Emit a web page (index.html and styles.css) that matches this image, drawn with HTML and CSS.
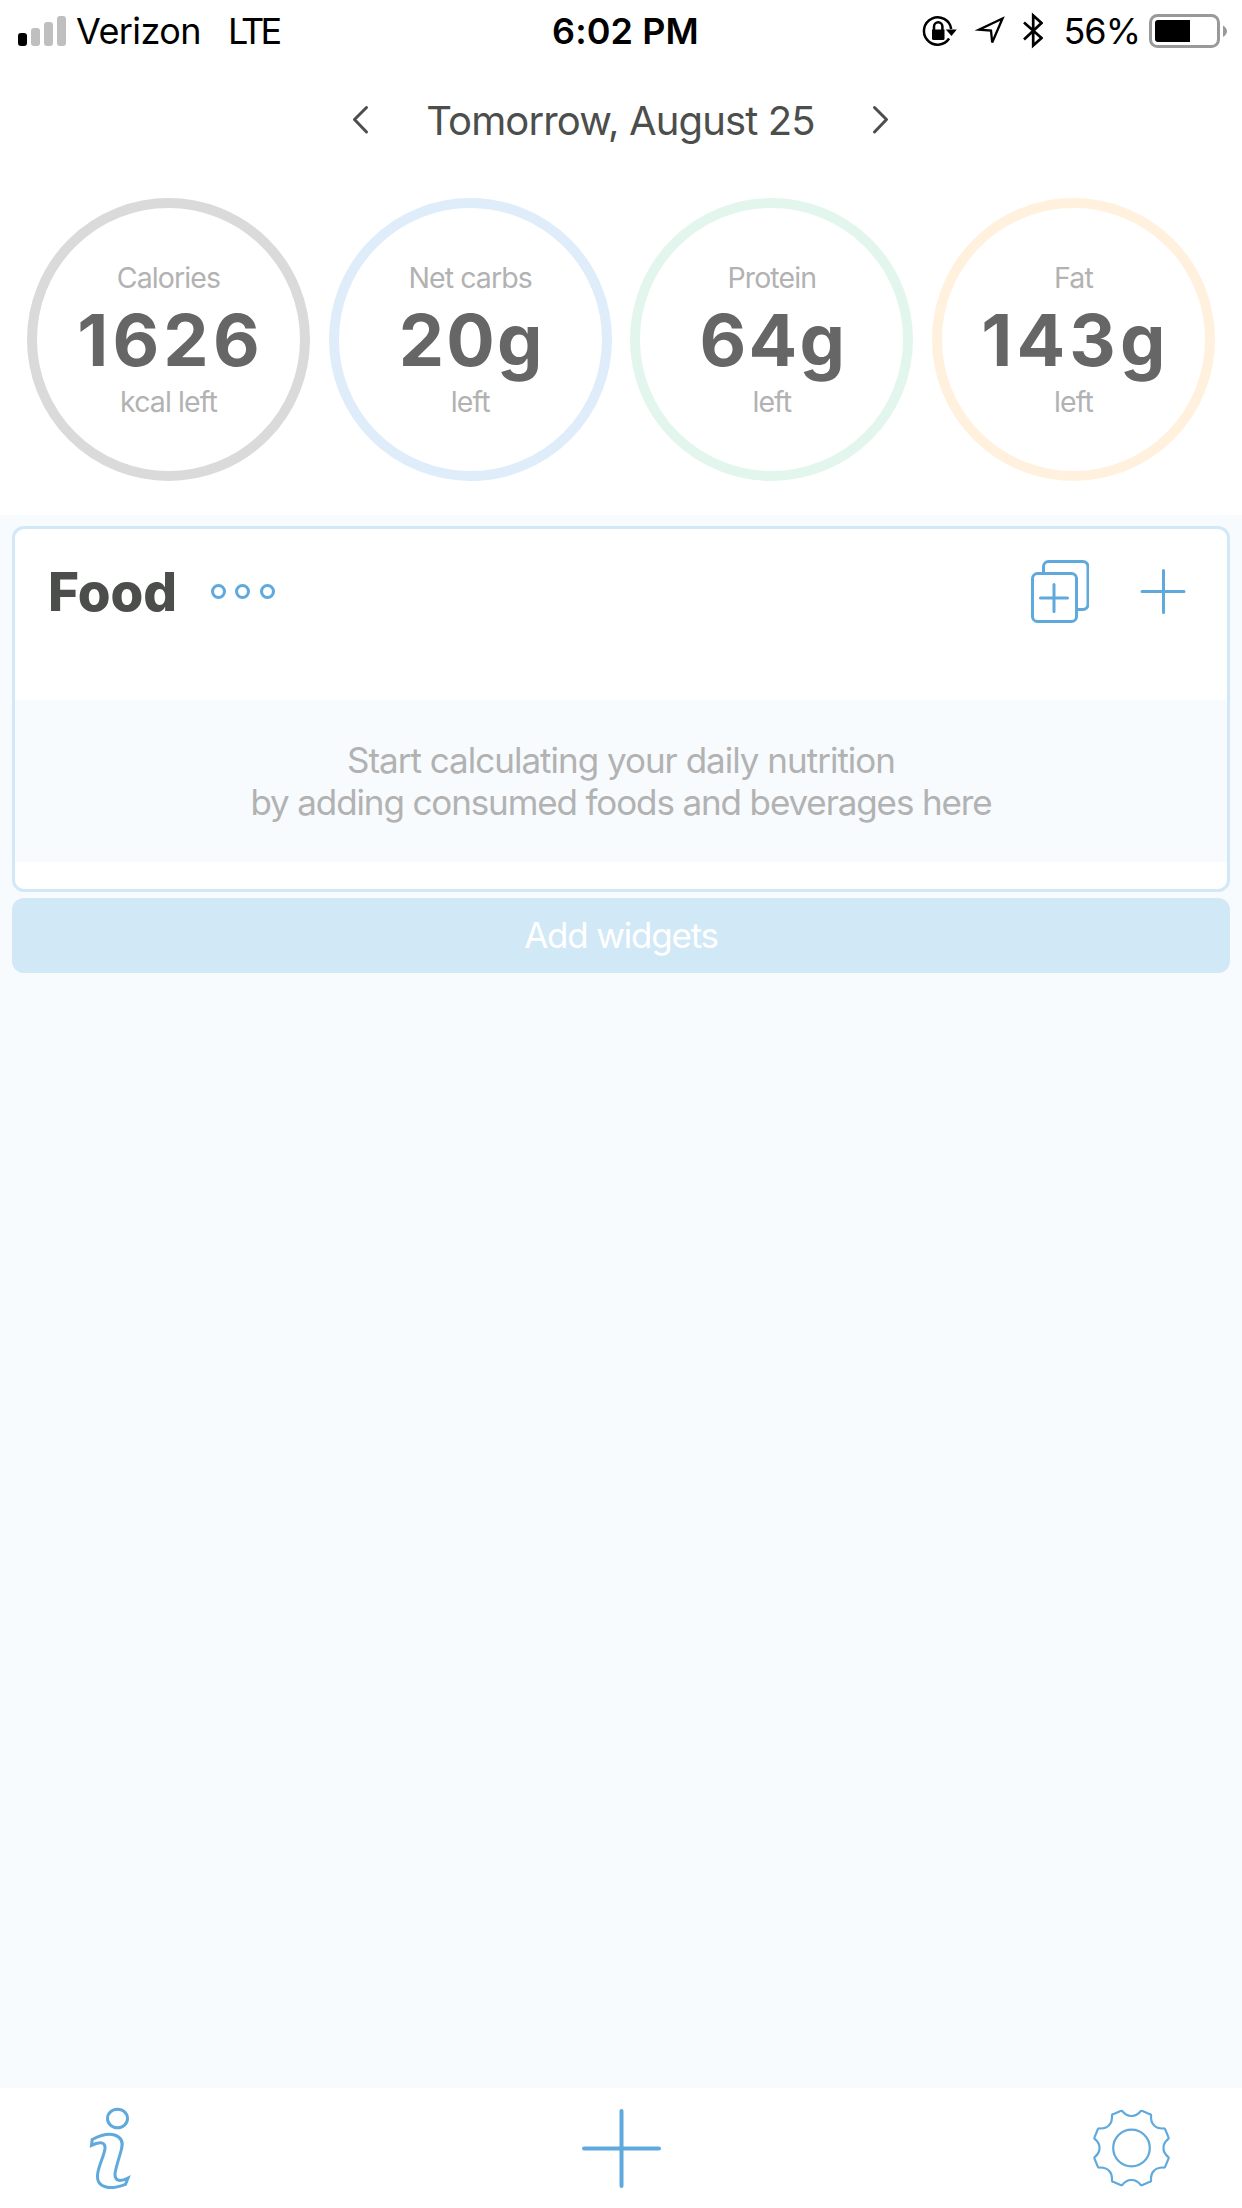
FILE: index.html
```
<!DOCTYPE html>
<html lang="en">
<head>
<meta charset="utf-8">
<title>Nutrition diary</title>
<link rel="stylesheet" href="styles.css">
</head>
<body>
<div class="app">
  <header class="header">
    <div class="status">
      <div class="status-left">
        <svg class="signal" width="48" height="32" viewBox="0 0 48 32">
          <rect x="0" y="18" width="9" height="13" rx="3" fill="#000"/>
          <rect x="13" y="13" width="9" height="18" rx="3" fill="#bfbfbf"/>
          <rect x="26" y="7" width="9" height="24" rx="3" fill="#bfbfbf"/>
          <rect x="39" y="1" width="9" height="30" rx="3" fill="#bfbfbf"/>
        </svg>
        <span class="carrier">Verizon</span>
        <span class="network">LTE</span>
      </div>
      <span class="clock">6:02 PM</span>
      <div class="status-right">
        <svg class="status-icons" width="124" height="40" viewBox="0 0 124 40">
          <g fill="none" stroke="#000" stroke-width="2.5">
            <path d="M30.100 27.500A13.700 13.700 0 1 1 32.200 18"/>
            <path d="M15 19v-3.500a4.200 4.200 0 0 1 8.400 0V19"/>
            <path d="M83.500 7.500 60 18.700 72 19.500 73.200 31.500Z" stroke-width="2.300"/>
            <path d="M105 11.500 122.500 27 114.200 34.500V4.500L122.500 12 105 28.500" stroke-width="2.700"/>
          </g>
          <path d="M13 18.500h12.500v9a1.500 1.500 0 0 1-1.500 1.500h-9.500a1.500 1.500 0 0 1-1.500-1.500Z"/>
          <path d="M26.800 18.500h11l-5.300 6.500Z"/>
        </svg>
        <span class="percent">56%</span>
        <svg class="battery" width="79" height="36" viewBox="0 0 79 36">
          <rect x="1.500" y="2.500" width="68" height="31" rx="7" fill="none" stroke="#999" stroke-width="3"/>
          <path d="M9 7H41V29H9A3 3 0 0 1 6 26V10A3 3 0 0 1 9 7Z"/>
          <path d="M74 12.500Q78 15 78 18.200T74 24Z" fill="#999"/>
        </svg>
      </div>
    </div>
    <div class="date-nav">
      <svg width="17" height="30" viewBox="0 0 17 30"><path d="M14.500 2.500 2.500 14.500 14.500 27"/></svg>
      <span class="date">Tomorrow, August 25</span>
      <svg width="17" height="30" viewBox="0 0 17 30"><path d="M2.500 2.500 14.500 14.500 2.500 27"/></svg>
    </div>
    <div class="rings">
      <div class="ring calories"><span class="label">Calories</span><span class="value wide">1626</span><span class="label">kcal left</span></div>
      <div class="ring carbs"><span class="label">Net carbs</span><span class="value">20g</span><span class="label">left</span></div>
      <div class="ring protein"><span class="label">Protein</span><span class="value">64g</span><span class="label">left</span></div>
      <div class="ring fat"><span class="label">Fat</span><span class="value wide">143g</span><span class="label">left</span></div>
    </div>
  </header>
  <main class="content">
    <section class="card">
      <div class="card-head">
        <h1 class="title">Food</h1>
        <svg class="dots" width="66" height="16" viewBox="0 0 66 16"><circle cx="8.500" cy="7.500" r="6"/><circle cx="32.500" cy="7.500" r="6"/><circle cx="57.500" cy="7.500" r="6"/></svg>
        <div class="actions">
          <svg width="58" height="64" viewBox="0 0 58 64">
            <path d="M12.500 13V6.500a5 5 0 0 1 5-5h34.500a5 5 0 0 1 5 5v38a5 5 0 0 1-5 5h-6"/>
            <rect x="1.500" y="13.500" width="44" height="48" rx="5"/>
            <path d="M9.500 38h27M23 24.500v27"/>
          </svg>
          <svg width="46" height="46" viewBox="0 0 46 46"><path d="M2 22.500h42M23.500 1.500v42"/></svg>
        </div>
      </div>
      <p class="empty">Start calculating your daily nutrition<br><span class="second">by adding consumed foods and beverages here</span></p>
    </section>
    <button class="add">Add widgets</button>
  </main>
  <nav class="tabs">
    <svg class="info" width="46" height="90" viewBox="0 -2 46 90">
      <ellipse cx="30.500" cy="13.500" rx="10" ry="9.300"/>
      <path d="M5.200 34.500C13 30.500 22 28.200 27.500 30C34.500 32.400 36.500 37 34.500 44C32 54 28.500 63 28 69C27.800 77 34 76.500 41 73L38.500 79.300C31 82 27 83 21.500 82.500C12 81 9.500 76 10.800 68C12 60 17 51 18 43.500C18.500 36.500 12.500 36.500 4.500 40.500Z"/>
    </svg>
    <svg width="82" height="82" viewBox="0 0 82 82"><path d="M4 41.500h75M41.500 4v75" class="thick"/></svg>
    <svg class="settings" width="82" height="82" viewBox="-40.500 -41 82 82">
      <circle class="gear" cx="0" cy="0" r="18.300"/>
      <path id="gear" class="gear"/>
    </svg>
  </nav>
</div>
<script src="gear.js"></script>
</body>
</html>
```
FILE: gear.js
```
// Outline of the settings gear: eight flat teeth joined by rounded hollows.
const point = (radius, degrees) => {
  const a = degrees * Math.PI / 180;
  return (radius * Math.cos(a)).toFixed(2) + ' ' + (radius * Math.sin(a)).toFixed(2);
};
let outline = '';
for (let k = 0; k < 8; k++) {
  const mid = 22.5 + 45 * k;
  outline += (k ? 'L' : 'M') + point(38.2, mid - 8.3) + 'Q' + point(38.8, mid - 7.3) + ' ' + point(38.5, mid - 6);
  outline += 'L' + point(38.5, mid + 6) + 'Q' + point(38.8, mid + 7.3) + ' ' + point(38.2, mid + 8.3);
  outline += 'C' + point(33.8, mid + 12) + ' ' + point(32, mid + 16) + ' ' + point(32, mid + 22.5);
  outline += 'C' + point(32, mid + 29) + ' ' + point(33.8, mid + 33) + ' ' + point(38.2, mid + 36.7);
}
document.getElementById('gear').setAttribute('d', outline + 'Z');
```
FILE: styles.css
```
* { box-sizing: border-box; }
body {
  margin: 0;
  background: #f7fbfe;
  font-family: Inter, "Liberation Sans", sans-serif;
}
.app { display: flex; flex-direction: column; height: 2208px; }
svg { display: block; flex: none; }
.header { height: 515px; background: #fff; }

.status {
  display: grid;
  grid-template-columns: 1fr auto 1fr;
  align-items: center;
  height: 62px;
  padding: 0 14px 0 18px;
  font-size: 36px;
  line-height: 62px;
  color: #000;
  white-space: nowrap;
}
.status-left, .status-right { display: flex; align-items: center; }
.status-right { justify-content: flex-end; }
.signal { margin-right: 10px; }
.carrier { width: 152px; letter-spacing: -0.6px; }
.network { letter-spacing: -3.8px; }
.clock { font-weight: 600; letter-spacing: 0.1px; padding-left: 5px; }
.status-icons { margin-right: 20px; }
.percent { letter-spacing: -1px; margin-right: 9px; }

.date-nav {
  display: flex;
  align-items: center;
  justify-content: space-between;
  height: 116px;
  padding: 0 353px 0 352px;
}
.date-nav svg { fill: none; stroke: #4c4e4c; stroke-width: 3; stroke-linecap: round; stroke-linejoin: round; }
.date { font-size: 40px; letter-spacing: -0.88px; color: #4c4e4c; white-space: nowrap; }

.rings { display: flex; justify-content: space-between; padding: 20px 27px 0; }
.ring {
  display: flex;
  flex-direction: column;
  align-items: center;
  justify-content: center;
  width: 283px;
  height: 283px;
  border: 10px solid;
  border-radius: 50%;
  line-height: 62px;
  white-space: nowrap;
}
.calories { border-color: #dadada; }
.carbs { border-color: #deedf9; }
.protein { border-color: #e2f6ed; }
.fat { border-color: #fff1dd; }
.label { font-size: 28.5px; letter-spacing: -0.9px; color: #b2b2b2; }
.value { padding-left: 3px; font-size: 72px; font-weight: 700; letter-spacing: 2.2px; color: #666; }
.value.wide { padding-left: 4px; letter-spacing: 4.2px; }

.content { flex: 1; padding: 11px 12px 0; }
.card { height: 366px; border: 3px solid #d1e8f7; border-radius: 12px; background: #fff; }
.card-head { display: flex; align-items: center; height: 125px; margin-bottom: 46px; padding: 0 41px 0 33px; }
.title { margin: 0; width: 160px; font-size: 53px; font-weight: 800; letter-spacing: 0; color: #4c4e4c; }
.card svg, .tabs svg { fill: none; stroke: #5fa9dd; stroke-width: 3; stroke-linecap: round; }
.dots { margin-left: 2px; }
.actions { display: flex; align-items: center; gap: 51px; margin-left: auto; }
.empty {
  height: 162px;
  margin: 0;
  padding-top: 39px;
  background: #f7fbfe;
  color: #b2b2b2;
  font-size: 35px;
  line-height: 42px;
  letter-spacing: -1px;
  text-align: center;
  white-space: nowrap;
}
.second { letter-spacing: -1.12px; }
.add {
  display: block;
  width: 100%;
  height: 75px;
  margin-top: 6px;
  padding: 0;
  border: 0;
  border-radius: 12px;
  background: #d1e8f6;
  color: #fff;
  font: 400 35px/75px Inter, "Liberation Sans", sans-serif;
  letter-spacing: -1.2px;
}
.tabs {
  display: grid;
  grid-template-columns: 1fr auto 1fr;
  align-items: center;
  height: 120px;
  padding: 0 69px;
  background: #fff;
}
.info { margin-left: 18px; }
.settings { justify-self: end; }
.tabs .thick { stroke-width: 4; }
.tabs .gear { stroke-width: 2.2; stroke-linejoin: round; }
```
